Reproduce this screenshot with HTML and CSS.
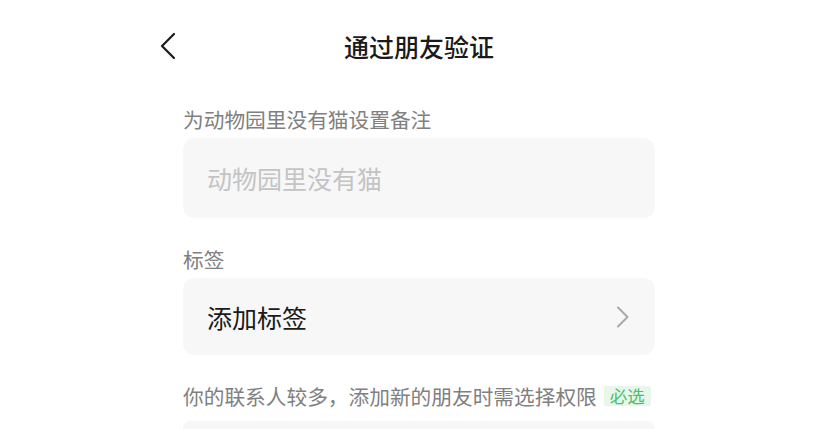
FILE: index.html
```html
<!DOCTYPE html>
<html lang="zh-CN">
<head>
<meta charset="utf-8">
<title>通过朋友验证</title>
<link rel="stylesheet" href="styles.css">
</head>
<body>
<div class="page">
  <header class="topbar">
    <button class="back" aria-label="返回">
      <svg width="16" height="28" viewBox="0 0 16 28"><path d="M14 2 L2 14 L14 26" fill="none" stroke="#1a1a1a" stroke-width="2.2" stroke-linecap="round" stroke-linejoin="round"/></svg>
    </button>
    <h1 class="title">通过朋友验证</h1>
    <span></span>
  </header>

  <div class="label">为动物园里没有猫设置备注</div>
  <div class="field"><span class="placeholder">动物园里没有猫</span></div>

  <div class="label label-gap">标签</div>
  <div class="field field-row">
    <span class="value">添加标签</span>
    <svg class="chev" width="14" height="22" viewBox="0 0 14 22"><path d="M2 1.5 L11.5 11 L2 20.5" fill="none" stroke="#a8a8a8" stroke-width="2" stroke-linecap="round" stroke-linejoin="round"/></svg>
  </div>

  <div class="label label-gap label-row">你的联系人较多，添加新的朋友时需选择权限<span class="badge">必选</span></div>
  <div class="field field-last"></div>
</div>
</body>
</html>
```

FILE: styles.css
```css
html, body {
  margin: 0;
  padding: 0;
  background: #ffffff;
  overflow: hidden;
}
body {
  font-family: "Noto Sans CJK SC", "Noto Sans", sans-serif;
  color: #1a1a1a;
}
.page {
  width: 472px;
  margin-left: 183px;
}
.topbar {
  height: 92px;
  margin-left: -24px;
  width: 520px;
  display: grid;
  grid-template-columns: 1fr auto 1fr;
  align-items: center;
}
.back {
  justify-self: start;
  border: 0;
  background: none;
  padding: 0;
  margin: 0 0 0 1px;
  width: 16px;
  height: 28px;
  display: flex;
}
.title {
  margin: 0;
  font-size: 25px;
  font-weight: 500;
  line-height: 34px;
  color: #1a1a1a;
}
.label {
  margin-top: 13px;
  font-size: 20.7px;
  line-height: 28px;
  color: #808080;
}
.label-gap {
  margin-top: 27px;
}
.label-row {
  display: flex;
  align-items: center;
}
.field {
  margin-top: 5px;
  height: 80px;
  background: #f7f7f7;
  border-radius: 12px;
  display: flex;
  align-items: center;
  padding: 0 24px;
  box-sizing: border-box;
}
.field-row {
  height: 77px;
  justify-content: space-between;
}
.field-last {
  margin-top: 11px;
  height: 8px;
  border-radius: 12px 12px 0 0;
}
.placeholder {
  font-size: 25px;
  color: #c4c4c4;
}
.value {
  font-size: 25px;
  color: #1a1a1a;
}
.chev {
  margin-right: 1px;
}
.badge {
  margin-left: 7px;
  font-size: 17.5px;
  line-height: 20px;
  padding: 0 6px;
  background: #e8f7ec;
  color: #4fbf6e;
  border-radius: 2px;
}
```
